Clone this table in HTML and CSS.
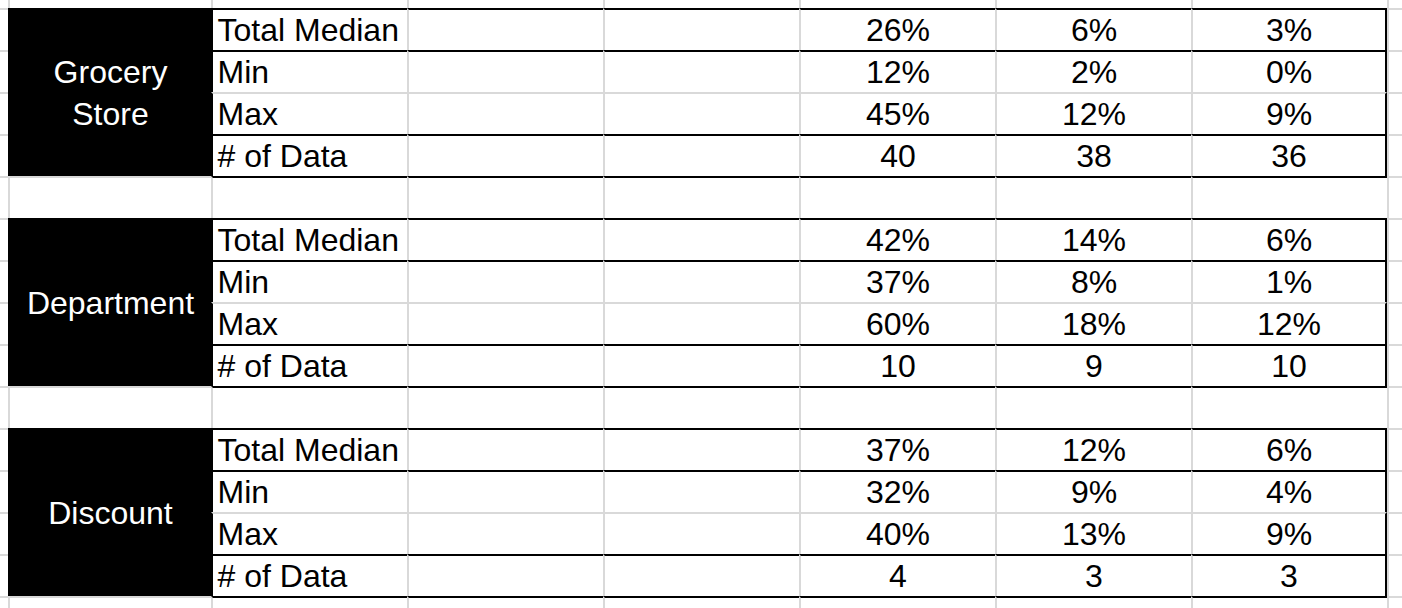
FILE: index.html
```html
<!DOCTYPE html>
<html>
<head>
<meta charset="utf-8">
<link rel="stylesheet" href="styles.css">
</head>
<body>
<div class="sheet">
  <!-- row 0 (partial) -->
  <div class="c edge top"></div><div class="c top"></div><div class="c top"></div><div class="c top"></div><div class="c top"></div><div class="c top"></div><div class="c top"></div><div class="c top"></div><div class="c top"></div>

  <!-- Grocery Store -->
  <div class="c edge"></div>
  <div class="c lbl">Grocery<br>Store</div>
  <div class="c t k name">Total Median</div><div class="c t"></div><div class="c t"></div>
  <div class="c t num">26%</div><div class="c t num">6%</div><div class="c t r num">3%</div>
  <div class="c"></div>

  <div class="c edge"></div>
  <div class="c t k name">Min</div><div class="c t"></div><div class="c t"></div>
  <div class="c t num">12%</div><div class="c t num">2%</div><div class="c t r num">0%</div>
  <div class="c"></div>

  <div class="c edge"></div>
  <div class="c k name">Max</div><div class="c"></div><div class="c"></div>
  <div class="c num">45%</div><div class="c num">12%</div><div class="c r num">9%</div>
  <div class="c"></div>

  <div class="c edge"></div>
  <div class="c t k name"># of Data</div><div class="c t"></div><div class="c t"></div>
  <div class="c t num">40</div><div class="c t num">38</div><div class="c t r num">36</div>
  <div class="c"></div>

  <!-- gap -->
  <div class="c edge"></div><div class="c"></div>
  <div class="c t"></div><div class="c t"></div><div class="c t"></div><div class="c t"></div><div class="c t"></div><div class="c t"></div>
  <div class="c"></div>

  <!-- Department -->
  <div class="c edge"></div>
  <div class="c lbl">Department</div>
  <div class="c t k name">Total Median</div><div class="c t"></div><div class="c t"></div>
  <div class="c t num">42%</div><div class="c t num">14%</div><div class="c t r num">6%</div>
  <div class="c"></div>

  <div class="c edge"></div>
  <div class="c t k name">Min</div><div class="c t"></div><div class="c t"></div>
  <div class="c t num">37%</div><div class="c t num">8%</div><div class="c t r num">1%</div>
  <div class="c"></div>

  <div class="c edge"></div>
  <div class="c k name">Max</div><div class="c"></div><div class="c"></div>
  <div class="c num">60%</div><div class="c num">18%</div><div class="c r num">12%</div>
  <div class="c"></div>

  <div class="c edge"></div>
  <div class="c t k name"># of Data</div><div class="c t"></div><div class="c t"></div>
  <div class="c t num">10</div><div class="c t num">9</div><div class="c t r num">10</div>
  <div class="c"></div>

  <!-- gap -->
  <div class="c edge"></div><div class="c"></div>
  <div class="c t"></div><div class="c t"></div><div class="c t"></div><div class="c t"></div><div class="c t"></div><div class="c t"></div>
  <div class="c"></div>

  <!-- Discount -->
  <div class="c edge"></div>
  <div class="c lbl">Discount</div>
  <div class="c t k name">Total Median</div><div class="c t"></div><div class="c t"></div>
  <div class="c t num">37%</div><div class="c t num">12%</div><div class="c t r num">6%</div>
  <div class="c"></div>

  <div class="c edge"></div>
  <div class="c t k name">Min</div><div class="c t"></div><div class="c t"></div>
  <div class="c t num">32%</div><div class="c t num">9%</div><div class="c t r num">4%</div>
  <div class="c"></div>

  <div class="c edge"></div>
  <div class="c k name">Max</div><div class="c"></div><div class="c"></div>
  <div class="c num">40%</div><div class="c num">13%</div><div class="c r num">9%</div>
  <div class="c"></div>

  <div class="c edge"></div>
  <div class="c t k name"># of Data</div><div class="c t"></div><div class="c t"></div>
  <div class="c t num">4</div><div class="c t num">3</div><div class="c t r num">3</div>
  <div class="c"></div>

  <!-- bottom partial -->
  <div class="c edge"></div><div class="c"></div>
  <div class="c t"></div><div class="c t"></div><div class="c t"></div><div class="c t"></div><div class="c t"></div><div class="c t"></div>
  <div class="c"></div>
</div>
</body>
</html>
```

FILE: styles.css
```css
html, body {
  margin: 0;
  padding: 0;
  background: #ffffff;
  overflow: hidden;
}

.sheet {
  display: grid;
  grid-template-columns: 8px 203px repeat(6, 196px) 15px;
  grid-template-rows: 8px repeat(14, 42px) 12px;
  width: 1402px;
  height: 608px;
  font-family: "Liberation Sans", Arial, sans-serif;
  font-size: 32px;
  color: #000;
}

.c {
  box-sizing: border-box;
  border-left: 2px solid #d9d9d9;
  border-top: 2px solid #d9d9d9;
  min-width: 0;
  white-space: nowrap;
  overflow: hidden;
}

.edge { border-left: 0; }
.top { border-top: 0; }

.t { border-top: 2px solid #000; }
.r { border-right: 2px solid #000; }
.k { border-left-color: #000; }

.lbl {
  grid-row: span 4;
  background: #000;
  color: #fff;
  border-color: #000;
  display: flex;
  align-items: center;
  justify-content: center;
  text-align: center;
  line-height: 42px;
  white-space: normal;
}

.name, .num {
  display: flex;
  align-items: flex-end;
  line-height: normal;
  padding-bottom: 1px;
}

.name {
  padding-left: 4.5px;
}

.num {
  justify-content: center;
}
```
